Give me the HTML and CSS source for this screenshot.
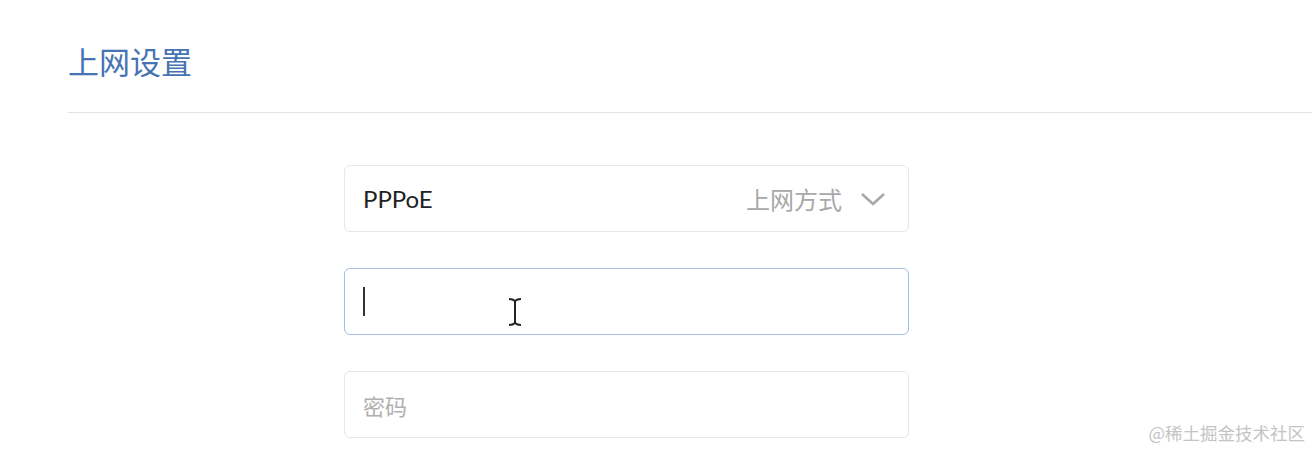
FILE: index.html
```html
<!DOCTYPE html>
<html lang="zh-CN">
<head>
    <meta charset="UTF-8">
    <title>上网设置</title>
    <link rel="stylesheet" href="styles.css">
</head>
<body>
    <div class="page">
        <h1 class="page-title">上网设置</h1>

        <form class="net-form">
            <div class="field field-select">
                <span class="field-value">PPPoE</span>
                <span class="field-hint">上网方式</span>
                <svg class="chevron" width="26" height="16" viewBox="0 0 26 16">
                    <path d="M2 3 L13 13 L24 3" fill="none" stroke="#a8a8a8" stroke-width="2.6"/>
                </svg>
            </div>

            <div class="field field-focus">
                <span class="caret"></span>
                <svg class="ibeam" width="16" height="30" viewBox="0 0 16 30">
                    <path d="M2 2 Q6 2 8 4 Q10 2 14 2 M8 4 L8 26 M2 28 Q6 28 8 26 Q10 28 14 28" fill="none" stroke="#222" stroke-width="2"/>
                </svg>
            </div>

            <div class="field">
                <span class="field-placeholder">密码</span>
            </div>
        </form>
    </div>

    <div class="watermark">@稀土掘金技术社区</div>
</body>
</html>
```

FILE: styles.css
```css
* {
    margin: 0;
    padding: 0;
    box-sizing: border-box;
}

body {
    font-family: 'Lato', 'Noto Sans CJK SC', sans-serif;
    background: #fff;
    color: #222;
    height: 451px;
    overflow: hidden;
    position: relative;
}

.page {
    padding: 39px 0 0 68px;
}

.page-title {
    font-family: 'Noto Sans CJK SC', sans-serif;
    font-weight: 400;
    font-size: 31px;
    line-height: 43px;
    color: #4673b4;
    padding-bottom: 30px;
    border-bottom: 1px solid #e3e3e3;
}

/* Form */
.net-form {
    width: 565px;
    margin: 52px 0 0 276px;
    display: flex;
    flex-direction: column;
    gap: 36px;
}

.field {
    height: 67px;
    border: 1px solid #e6e6e6;
    border-radius: 6px;
    display: flex;
    align-items: center;
    padding: 0 22px 0 18px;
    position: relative;
    font-size: 20px;
}

.field-value {
    flex: 1;
    color: #222;
    font-size: 24px;
}

.field-hint {
    font-family: 'Noto Sans CJK SC', sans-serif;
    color: #a8a8a8;
    font-size: 24px;
    margin-right: 18px;
}

.field-focus {
    border-color: #a9bfe2;
}

.caret {
    width: 2px;
    height: 29px;
    background: #333;
}

.ibeam {
    position: absolute;
    left: 162px;
    top: 28px;
}

.field-placeholder {
    font-family: 'Noto Sans CJK SC', sans-serif;
    color: #b0b0b0;
    font-size: 22px;
}

.watermark {
    position: absolute;
    right: 7px;
    bottom: 6px;
    font-family: 'Noto Sans CJK SC', sans-serif;
    font-size: 17.5px;
    color: #c4c4c4;
}
```
